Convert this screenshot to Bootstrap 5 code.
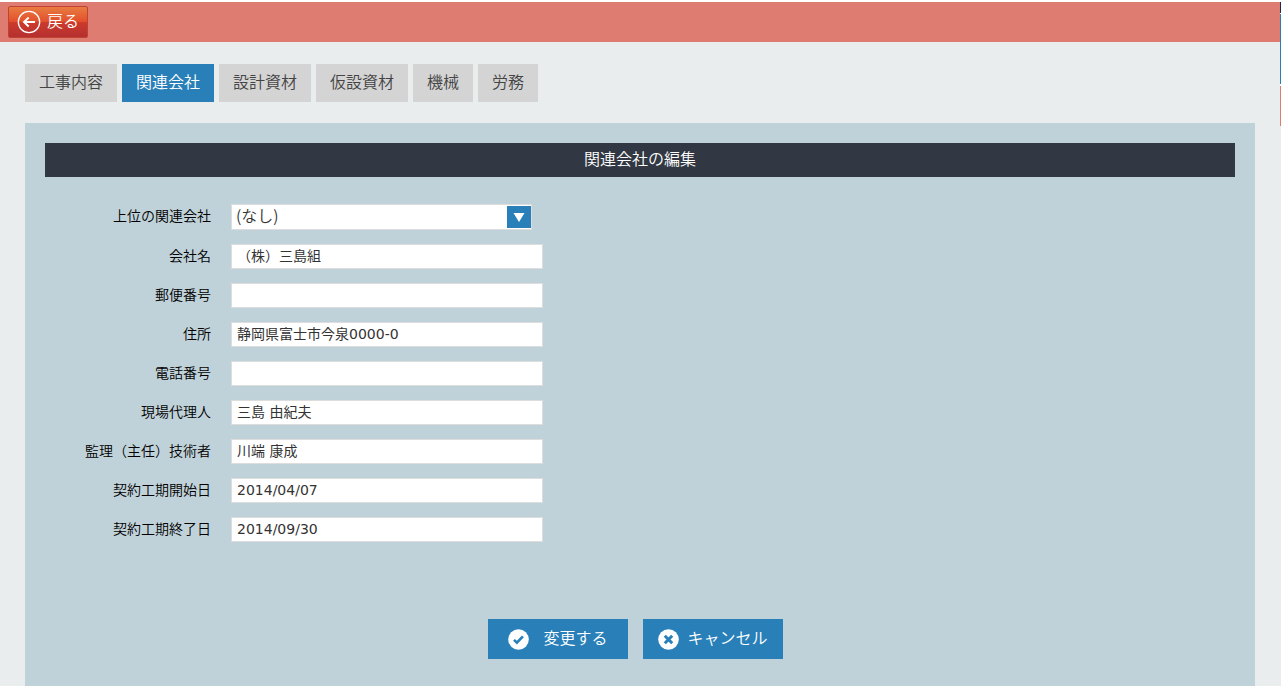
<!DOCTYPE html>
<html lang="ja">
<head>
<meta charset="utf-8">
<meta name="viewport" content="width=device-width, initial-scale=1">
<title>関連会社の編集</title>
<link href="https://cdn.jsdelivr.net/npm/bootstrap@5.3.0/dist/css/bootstrap.min.css" rel="stylesheet">
<style>
  body { background: #e9edee; color: #000; font-family: "Noto Sans CJK JP", sans-serif; font-size: 16px; font-weight: 350; line-height: 24px; }
  .btn { font-weight: 350; }
  .topbar { background: #df7c71; border-top: 2px solid #fff; height: 42px; padding: 4px 8px; }
  .btn-back { width: 80px; height: 32px; padding: 0 8px; gap: 6px; border: 1px solid #c0432f; border-radius: 2px; color: #fff; line-height: 24px;
    background: linear-gradient(#e87c42 0%, #e2502c 48%, #cb3a2c 52%, #b53030 100%); }
  .btn-back span { padding-bottom: 4px; }
  .btn-back:hover { color: #fff; border-color: #a03020; }
  .side-strip { width: 1px; padding-top: 2px; background: linear-gradient(#fff, #fff) top / 100% 86px no-repeat; }
  .strip-navy { height: 11px; background: #1a2c52; margin-bottom: 1px; }
  .strip-blue { height: 70px; background: #2980b9; margin-bottom: 2px; }
  .strip-red { height: 40px; background: #df7c71; }
  .content-area { padding: 22px 25px 0; }
  .tabs { gap: 5px; margin-bottom: 21px; }
  .tabs .nav-link { height: 38px; padding: 5px 14px; border-radius: 0; background: #d4d4d4; color: #444; }
  .tabs .nav-link.active { background: #2980b9; color: #fff; }
  .edit-panel { background: #c0d2d9; padding: 20px 20px 27px; }
  .panel-title { background: #323843; color: #fff; font-size: 16px; line-height: 24px; font-weight: 350; padding: 3px 0 7px; margin-bottom: 27px; }
  .form-line { gap: 20px; margin-bottom: 14px; }
  .form-line label { width: 166px; font-size: 14px; line-height: 22px; text-align: right; }
  .field { height: 25px; width: 312px; padding: 0 5px 3px; border: 1px solid #ddd; border-radius: 0; background: #fff; color: #333;
    font-family: "DejaVu Sans", "Noto Sans CJK JP", sans-serif; font-size: 14px; font-weight: 400; line-height: 20px; }
  .field-date { padding-bottom: 1px; }
  .select-wrap { width: 301px; }
  .select-wrap .field { width: 100%; height: 26px; padding: 0 28px 4px 4px; font-family: "Noto Sans CJK JP", sans-serif; font-size: 16px; font-weight: 350; appearance: none; }
  .select-arrow { top: 2px; right: 1px; width: 24px; height: 22px; pointer-events: none; }
  .actions { gap: 15px; padding-right: 9px; margin-top: 77px; }
  .btn-act { width: 140px; height: 40px; padding: 0; border: 0; border-radius: 0; background: #2980b9; color: #fff; line-height: 24px; }
  .btn-act:hover { background: #216a9a; color: #fff; }
  .btn-act span { padding-bottom: 4px; }
  .gap-wide { gap: 14px; }
  .gap-tight { gap: 8px; }
</style>
</head>
<body class="d-flex min-vh-100">
<div class="flex-grow-1 d-flex flex-column">
  <header class="topbar">
    <button type="button" class="btn btn-back d-flex align-items-center">
      <svg width="24" height="24" viewBox="0 0 24 24" fill="none" stroke="#fff" aria-hidden="true"><circle cx="12" cy="12" r="10.7" stroke-width="1.3"/><path d="M18 12H7.5M11.7 7.5 7 12l4.700 4.500" stroke-width="1.900"/></svg>
      <span>戻る</span>
    </button>
  </header>
  <main class="content-area flex-grow-1 d-flex flex-column">
    <nav class="nav tabs">
      <a class="nav-link" href="#">工事内容</a>
      <a class="nav-link active" aria-current="page" href="#">関連会社</a>
      <a class="nav-link" href="#">設計資材</a>
      <a class="nav-link" href="#">仮設資材</a>
      <a class="nav-link" href="#">機械</a>
      <a class="nav-link" href="#">労務</a>
    </nav>
    <section class="edit-panel flex-grow-1">
      <h1 class="panel-title text-center">関連会社の編集</h1>
      <form>
        <div class="form-line d-flex">
          <label for="parent">上位の関連会社</label>
          <div class="select-wrap position-relative">
            <select id="parent" class="field d-block"><option>(なし)</option></select>
            <svg class="select-arrow position-absolute" viewBox="0 0 24 22" aria-hidden="true"><path fill="#2980b9" d="M0 0h24v22H0z"/><path fill="#fff" d="M6.500 7h11L12 16z"/></svg>
          </div>
        </div>
        <div class="form-line d-flex"><label for="company">会社名</label><input id="company" class="field" type="text" value="（株）三島組"></div>
        <div class="form-line d-flex"><label for="zip">郵便番号</label><input id="zip" class="field" type="text"></div>
        <div class="form-line d-flex"><label for="address">住所</label><input id="address" class="field" type="text" value="静岡県富士市今泉0000-0"></div>
        <div class="form-line d-flex"><label for="tel">電話番号</label><input id="tel" class="field" type="text"></div>
        <div class="form-line d-flex"><label for="agent">現場代理人</label><input id="agent" class="field" type="text" value="三島 由紀夫"></div>
        <div class="form-line d-flex"><label for="engineer">監理（主任）技術者</label><input id="engineer" class="field" type="text" value="川端 康成"></div>
        <div class="form-line d-flex"><label for="start">契約工期開始日</label><input id="start" class="field field-date" type="text" value="2014/04/07"></div>
        <div class="form-line d-flex"><label for="end">契約工期終了日</label><input id="end" class="field field-date" type="text" value="2014/09/30"></div>
        <div class="actions d-flex justify-content-center">
          <button type="submit" class="btn btn-act gap-wide d-flex align-items-center justify-content-center">
            <svg width="21" height="21" viewBox="0 0 21 21" aria-hidden="true"><circle cx="10.500" cy="10.500" r="10.300" fill="#fff"/><path d="m6 10.800 2.900 2.900 6-6.400" fill="none" stroke="#2980b9" stroke-width="2.600"/></svg>
            <span>変更する</span>
          </button>
          <button type="button" class="btn btn-act gap-tight d-flex align-items-center justify-content-center">
            <svg width="21" height="21" viewBox="0 0 21 21" aria-hidden="true"><circle cx="10.500" cy="10.500" r="10.300" fill="#fff"/><path d="m6.800 6.800 7.400 7.400m0-7.400-7.400 7.400" fill="none" stroke="#2980b9" stroke-width="3"/></svg>
            <span>キャンセル</span>
          </button>
        </div>
      </form>
    </section>
  </main>
</div>
<aside class="side-strip" aria-hidden="true">
  <div class="strip-navy"></div>
  <div class="strip-blue"></div>
  <div class="strip-red"></div>
</aside>
<script src="https://cdn.jsdelivr.net/npm/bootstrap@5.3.0/dist/js/bootstrap.bundle.min.js"></script>
</body>
</html>
